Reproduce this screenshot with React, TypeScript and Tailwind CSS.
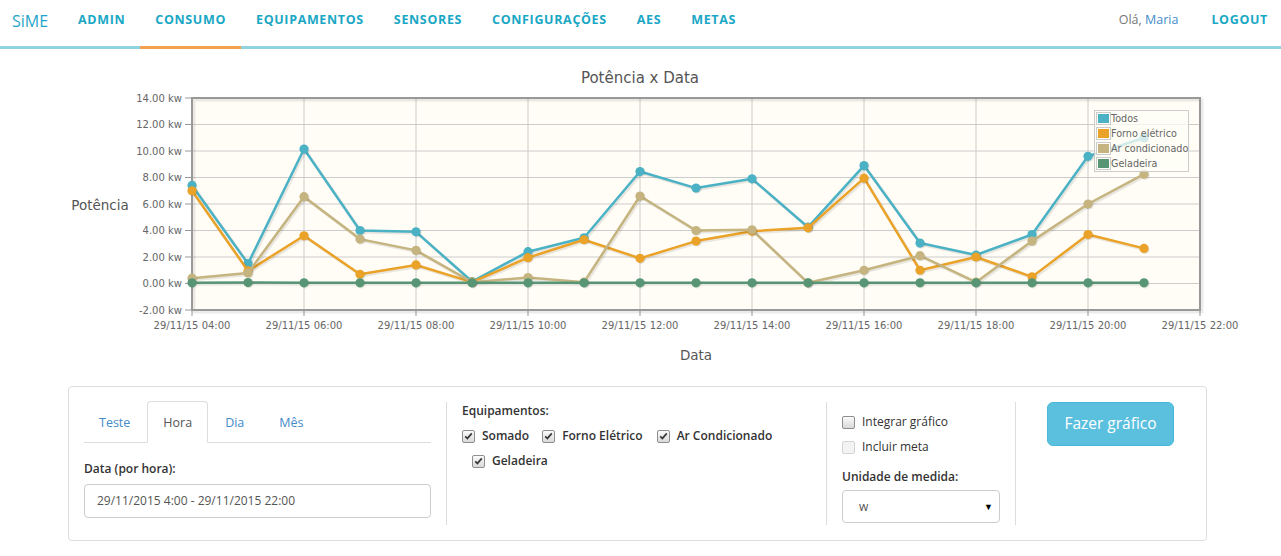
import React from "react";

const X = (i: number) => 192 + 56 * i;
const Y = (v: number) => 283.5 - v * 13.25;

const series = [
  {
    name: "Todos",
    color: "#4bb2c5",
    data: [7.4, 1.5, 10.15, 4.0, 3.9, 0.15, 2.4, 3.45, 8.45, 7.2, 7.9, 4.25, 8.9, 3.05, 2.15, 3.7, 9.6, 11.0],
  },
  {
    name: "Forno elétrico",
    color: "#eaa228",
    data: [7.0, 0.95, 3.6, 0.7, 1.4, 0.1, 1.95, 3.3, 1.9, 3.2, 3.95, 4.2, 7.95, 1.0, 2.0, 0.5, 3.7, 2.65],
  },
  {
    name: "Ar condicionado",
    color: "#c5b47f",
    data: [0.4, 0.8, 6.55, 3.35, 2.5, 0.1, 0.45, 0.1, 6.6, 4.0, 4.05, 0.05, 1.0, 2.1, 0.1, 3.2, 6.0, 8.25],
  },
  {
    name: "Geladeira",
    color: "#579575",
    data: [0.05, 0.07, 0.05, 0.05, 0.05, 0.05, 0.05, 0.05, 0.05, 0.05, 0.05, 0.05, 0.05, 0.05, 0.05, 0.05, 0.05, 0.05],
  },
];

const yTicks = [14, 12, 10, 8, 6, 4, 2, 0, -2];
const xTicks = ["04:00", "06:00", "08:00", "10:00", "12:00", "14:00", "16:00", "18:00", "20:00", "22:00"];

function Chart() {
  const fontTick = "'DejaVu Sans', 'Liberation Sans', sans-serif";
  return (
    <svg width={1281} height={337} viewBox="0 49 1281 337" className="block">
      <text x={640} y={83} textAnchor="middle" fontSize={15} fill="#555" fontFamily={fontTick}>
        Potência x Data
      </text>
      <text x={100} y={210} textAnchor="middle" fontSize={13.5} fill="#555" fontFamily={fontTick}>
        Potência
      </text>
      <text x={696} y={360} textAnchor="middle" fontSize={13.5} fill="#555" fontFamily={fontTick}>
        Data
      </text>
      <rect x={192} y={98} width={1008} height={212} fill="#fffdf6" />
      {yTicks.map((v) => (
        <g key={v}>
          <line x1={192} x2={1200} y1={Y(v)} y2={Y(v)} stroke="#cccccc" strokeWidth={1} />
          <line x1={185} x2={192} y1={Y(v)} y2={Y(v)} stroke="#999" strokeWidth={1} />
          <text x={182} y={Y(v) + 3.5} textAnchor="end" fontSize={10} fill="#666" fontFamily={fontTick}>
            {v.toFixed(2)} kw
          </text>
        </g>
      ))}
      {xTicks.map((t, i) => (
        <g key={t}>
          <line x1={X(i * 2)} x2={X(i * 2)} y1={98} y2={310} stroke="#cccccc" strokeWidth={1} />
          <line x1={X(i * 2)} x2={X(i * 2)} y1={310} y2={316} stroke="#999" strokeWidth={1} />
          <text x={X(i * 2)} y={329} textAnchor="middle" fontSize={10} fill="#666" fontFamily={fontTick}>
            29/11/15 {t}
          </text>
        </g>
      ))}
      <rect x={194} y={100} width={1008} height={212} fill="none" stroke="rgba(0,0,0,0.08)" strokeWidth={3} />
      <rect x={192} y={98} width={1008} height={212} fill="none" stroke="#999999" strokeWidth={2} />
      <g>
        {series.map((s) => {
          const pts = s.data.map((v, i) => `${X(i)},${Y(v)}`).join(" ");
          return (
            <g key={s.name}>
              <polyline points={pts} fill="none" stroke="rgba(0,0,0,0.09)" strokeWidth={3} transform="translate(1.5,1.5)" strokeLinejoin="round" />
              <polyline points={pts} fill="none" stroke={s.color} strokeWidth={2.5} strokeLinejoin="round" />
              {s.data.map((v, i) => (
                <g key={i}>
                  <circle cx={X(i) + 1} cy={Y(v) + 1} r={4.6} fill="rgba(0,0,0,0.1)" />
                  <circle cx={X(i)} cy={Y(v)} r={4.6} fill={s.color} />
                </g>
              ))}
            </g>
          );
        })}
      </g>
      <rect x={1094.5} y={110.5} width={94} height={61} fill="#fffdf6" fillOpacity={0.75} stroke="#cccccc" />
      {series.map((s, i) => (
        <g key={s.name}>
          <rect x={1096.5} y={112.5 + 15 * i} width={14} height={12} fill="#fffdf6" stroke="#cccccc" />
          <rect x={1098} y={114 + 15 * i} width={11} height={9} fill={s.color} />
          <text x={1111} y={122 + 15 * i} fontSize={9.6} fill="#666" fontFamily={fontTick}>
            {s.name}
          </text>
        </g>
      ))}
    </svg>
  );
}

function Check({ checked, disabled }: { checked?: boolean; disabled?: boolean }) {
  return (
    <span
      className={
        disabled
          ? "inline-flex h-[13px] w-[13px] shrink-0 items-center justify-center rounded-[2px] border border-[#d4d4d4] bg-[#f3f3f3]"
          : "inline-flex h-[13px] w-[13px] shrink-0 items-center justify-center rounded-[2px] border border-[#8e8e8e] bg-linear-to-b from-[#fbfbfb] to-[#d9d9d9]"
      }
    >
      {checked && (
        <svg width="9" height="8" viewBox="0 0 9 8">
          <path d="M1.2 4.3 L3.4 6.4 L7.8 1.4" stroke="#3a3a3a" strokeWidth="1.7" fill="none" />
        </svg>
      )}
    </span>
  );
}

function Nav() {
  const items = ["ADMIN", "CONSUMO", "EQUIPAMENTOS", "SENSORES", "CONFIGURAÇÕES", "AES", "METAS"];
  return (
    <nav className="flex h-[49px] items-stretch border-b-[3px] border-[#8dd3e0] bg-white">
      <div className="flex items-center pb-[5px] pl-[12px] pr-[15px] text-[16px] text-[#1fa5c9]">SiME</div>
      <ul className="flex items-stretch">
        {items.map((it) => (
          <li
            key={it}
            className={
              it === "CONSUMO"
                ? "-mb-[3px] flex items-center border-b-[3px] border-[#f2a24e] px-[15px] pb-[5px] text-[12.5px] font-bold tracking-[0.65px] text-[#19a7c5]"
                : "flex items-center px-[15px] pb-[5px] text-[12.5px] font-bold tracking-[0.65px] text-[#19a7c5]"
            }
          >
            {it}
          </li>
        ))}
      </ul>
      <div className="ml-auto flex items-center pb-[5px] pr-[13px]">
        <span className="text-[12.5px] text-[#777]">
          Olá, <span className="text-[#428bca]">Maria</span>
        </span>
        <span className="ml-[33px] text-[12.5px] font-bold tracking-[0.65px] text-[#19a7c5]">LOGOUT</span>
      </div>
    </nav>
  );
}

function Panel() {
  return (
    <div className="ml-[68px] flex h-[155px] w-[1139px] rounded-[4px] border border-[#dddddd] p-[15px] text-[12px] text-[#333]">
      {/* column 1 */}
      <div className="w-[363px] shrink-0 border-r border-[#dddddd] pr-[15px]">
        <div className="flex h-[41px] items-end border-b border-[#dddddd] text-[12.5px]">
          <div className="mr-[2px] flex h-[41px] items-center px-[15px] pt-[3px] text-[#428bca]">Teste</div>
          <div className="-mb-px mr-[2px] flex h-[42px] items-center rounded-t-[4px] border border-b-white border-[#dddddd] bg-white px-[15px] pt-[3px] text-[#555]">
            Hora
          </div>
          <div className="mr-[2px] flex h-[41px] items-center px-[15px] pt-[3px] text-[#428bca]">Dia</div>
          <div className="mr-[2px] flex h-[41px] items-center px-[18px] pt-[3px] text-[#428bca]">Mês</div>
        </div>
        <div className="mt-[17px] font-semibold">Data (por hora):</div>
        <div className="mt-[6px] flex h-[34px] items-center rounded-[4px] border border-[#cccccc] px-[12px] text-[12px] text-[#555]">
          29/11/2015 4:00 - 29/11/2015 22:00
        </div>
      </div>
      {/* column 2 */}
      <div className="w-[380px] shrink-0 border-r border-[#dddddd] px-[15px]">
        <div className="font-semibold leading-[18px]">Equipamentos:</div>
        <div className="mt-[7px] flex items-center">
          <Check checked />
          <span className="ml-[7px] font-semibold">Somado</span>
          <span className="ml-[13px]">
            <Check checked />
          </span>
          <span className="ml-[7px] font-semibold">Forno Elétrico</span>
          <span className="ml-[14px]">
            <Check checked />
          </span>
          <span className="ml-[7px] font-semibold">Ar Condicionado</span>
        </div>
        <div className="mt-[7px] flex items-center pl-[10px]">
          <Check checked />
          <span className="ml-[7px] font-semibold">Geladeira</span>
        </div>
      </div>
      {/* column 3 */}
      <div className="w-[189px] shrink-0 border-r border-[#dddddd] pl-[15px] pr-[15px]">
        <div className="mt-[11px] flex items-center">
          <Check />
          <span className="ml-[7px]">Integrar gráfico</span>
        </div>
        <div className="mt-[7px] flex items-center">
          <Check disabled />
          <span className="ml-[7px]">Incluir meta</span>
        </div>
        <div className="mt-[12px] font-semibold">Unidade de medida:</div>
        <div className="mt-[4px] flex h-[33px] items-center justify-between rounded-[4px] border border-[#cccccc] pl-[16px] pr-[6px] text-[12px] text-[#555]">
          <span>w</span>
          <span className="text-[9px] text-black">▼</span>
        </div>
      </div>
      {/* column 4 */}
      <div className="pl-[31px]">
        <button className="flex h-[44px] w-[127px] items-center justify-center rounded-[6px] border border-[#46b8da] bg-[#5bc0de] text-[15.5px] text-white">
          Fazer gráfico
        </button>
      </div>
    </div>
  );
}

export default function App() {
  return (
    <div className="h-[556px] w-[1281px] overflow-hidden bg-white" style={{ fontFamily: "'Open Sans', 'Noto Sans', sans-serif" }}>
      <Nav />
      <Chart />
      <Panel />
    </div>
  );
}
